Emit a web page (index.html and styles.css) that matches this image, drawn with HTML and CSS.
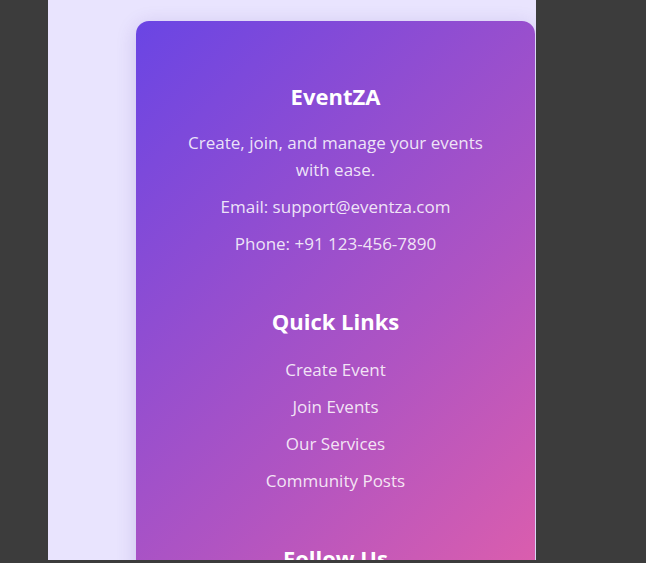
FILE: index.html
```html
<!DOCTYPE html>
<html lang="en">
<head>
<meta charset="utf-8">
<title>EventZA Footer</title>
<link rel="stylesheet" href="styles.css">
</head>
<body>
<div class="frame">
  <footer class="card">
    <section class="block">
      <h3 class="title">EventZA</h3>
      <p class="text">Create, join, and manage your events with ease.</p>
      <p class="text">Email: support@eventza.com</p>
      <p class="text">Phone: +91 123-456-7890</p>
    </section>
    <section class="block">
      <h3 class="title">Quick Links</h3>
      <ul class="links">
        <li><a href="#">Create Event</a></li>
        <li><a href="#">Join Events</a></li>
        <li><a href="#">Our Services</a></li>
        <li><a href="#">Community Posts</a></li>
      </ul>
    </section>
    <section class="block">
      <h3 class="title">Follow Us</h3>
      <div class="social">
        <span class="dot"></span><span class="dot"></span><span class="dot"></span><span class="dot"></span>
      </div>
    </section>
  </footer>
</div>
</body>
</html>
```

FILE: styles.css
```css
html, body {
  margin: 0;
  padding: 0;
}
body {
  background: #3c3c3c;
  width: 646px;
  height: 563px;
  overflow: hidden;
  font-family: "Open Sans", "Noto Sans", sans-serif;
}
.frame {
  margin-left: 48px;
  width: 488px;
  height: 560px;
  background: #e9e4fe;
  overflow: hidden;
  box-sizing: border-box;
  padding: 21px 0 0 88px;
}
.card {
  width: 399px;
  box-sizing: border-box;
  border-radius: 13px;
  background: linear-gradient(135deg, #6a45e4 0%, #b054c2 55%, #ee62a4 100%);
  box-shadow: 0 4px 20px rgba(80, 40, 160, 0.18);
  padding: 61px 40px 40px;
  text-align: center;
  color: rgba(255, 255, 255, 0.86);
}
.block {
  margin-bottom: 50px;
}
.title {
  margin: 0 0 18px;
  font-size: 22px;
  line-height: 29px;
  font-weight: 700;
  color: #ffffff;
}
.text {
  margin: 0 0 10px;
  font-size: 17px;
  line-height: 27px;
}
.links {
  list-style: none;
  margin: 20px 0 0;
  padding: 0;
}
.links li {
  margin-bottom: 10px;
  font-size: 17px;
  line-height: 27px;
}
.links a {
  color: rgba(255, 255, 255, 0.86);
  text-decoration: none;
}
.social {
  display: flex;
  justify-content: center;
  gap: 16px;
}
.dot {
  width: 36px;
  height: 36px;
  border-radius: 50%;
  background: rgba(255, 255, 255, 0.2);
}
```
